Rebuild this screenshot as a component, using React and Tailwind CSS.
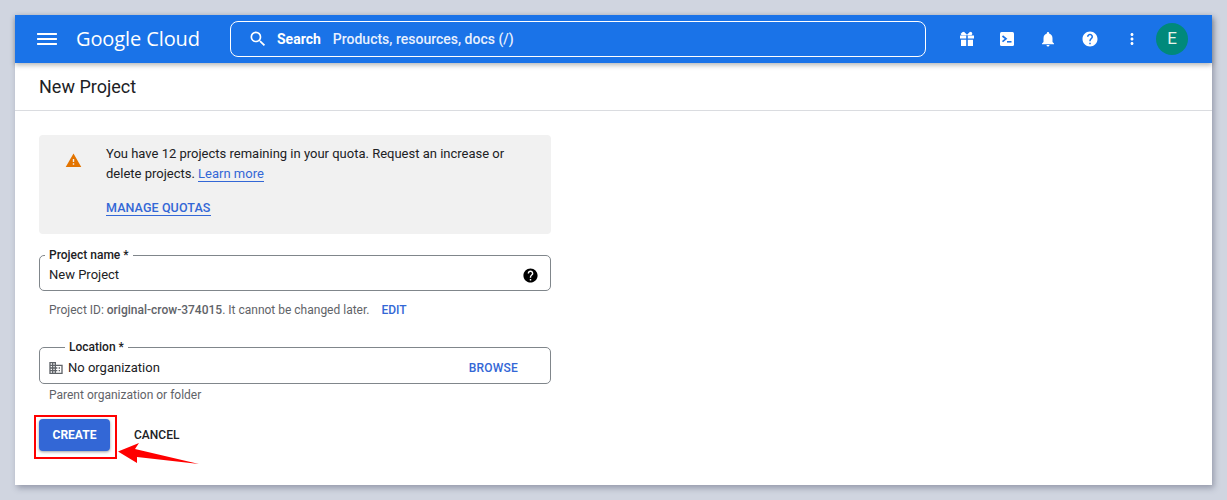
import React from "react";
import { MdMenu, MdSearch, MdNotifications, MdHelp, MdMoreVert, MdWarning, MdDomain } from "react-icons/md";

function GiftIcon() {
  return (
    <svg width="16" height="16" viewBox="0 0 16 16" fill="white">
      <path d="M1 4.5h6.2v3H1zM8.8 4.5H15v3H8.8zM2 8.7h5.2V15H2zM8.8 8.7H14V15H8.8z" />
      <path d="M3.2 1.2 5 .8 8 3.7 11 .8l1.8.4.6 1.8-1 1.2H2.6l-1-1.2z" />
    </svg>
  );
}

function ShellIcon() {
  return (
    <svg width="16" height="16" viewBox="0 0 16 16">
      <rect x="1" y="1" width="14" height="14" rx="1.5" fill="white" />
      <path d="M3.5 5 7 7.8 3.5 10.6" fill="none" stroke="#1a73e8" strokeWidth="1.7" />
      <path d="M8 10h4.5v1.6H8z" fill="#1a73e8" />
    </svg>
  );
}

function Field({ label, labelOffset, children }) {
  return (
    <fieldset className={`border border-[#80868b] rounded-[5px] w-[512px] ${labelOffset} flex items-center`}>
      <legend className="px-[4px] text-[12px] leading-[14px] font-medium text-[#202124]">{label}</legend>
      {children}
    </fieldset>
  );
}

export default function App() {
  return (
    <div className="min-h-[500px] bg-[#d0d5e0] p-[15px] font-['Roboto',sans-serif] overflow-hidden">
      <div className="relative w-[1197px] h-[470px] bg-white shadow-[2px_3px_6px_rgba(60,64,90,0.4)]">
        <header className="relative z-10 h-[48px] bg-[#1a73e8] flex items-center text-white shadow-[0_2px_5px_rgba(60,64,67,0.4)]">
          <MdMenu size={24} className="ml-[20px] scale-x-[1.1]" />
          <span className="ml-[17px] w-[154px] text-[20px] leading-[24px] tracking-[-0.1px] font-['Open_Sans',sans-serif] whitespace-nowrap">Google Cloud</span>
          <div className="w-[696px] h-[36px] border border-white rounded-[8px] flex items-center text-[14px]">
            <MdSearch size={20} className="ml-[17px]" />
            <span className="ml-[9px] font-bold">Search</span>
            <span className="ml-[12px] font-medium text-[#e8f0fe]">Products, resources, docs (/)</span>
          </div>
          <div className="ml-[33px] flex items-center gap-[24px]">
            <GiftIcon />
            <ShellIcon />
            <MdNotifications size={18} />
            <MdHelp size={18} />
            <MdMoreVert size={18} />
          </div>
          <div className="ml-[15px] w-[32px] h-[32px] rounded-full bg-[#00897b] flex items-center justify-center text-[17px] text-[#e6f4ea]">E</div>
        </header>

        <div className="h-[48px] border-b border-[#dadce0] pl-[24px] flex items-center text-[18px] text-[#202124]">New Project</div>

        <main className="pl-[24px] pt-[24px]">
          <section className="w-[512px] h-[99px] bg-[#f1f1f1] rounded-[4px] flex">
            <MdWarning size={17} className="ml-[26px] mt-[17px] text-[#e37400]" />
            <div className="ml-[24px] pt-[9px] text-[13px] leading-[20px] text-[#202124]">
              <p>You have 12 projects remaining in your quota. Request an increase or</p>
              <p>delete projects. <a className="text-[#3367d6] border-b border-[#3367d6]">Learn more</a></p>
              <a className="inline-block mt-[16px] leading-[15px] text-[12.5px] font-medium tracking-[0.1px] text-[#3367d6] border-b border-[#3367d6]">MANAGE QUOTAS</a>
            </div>
          </section>

          <div className="mt-[14px]">
            <Field label="Project name *" labelOffset="pl-[5px] h-[43px]">
              <div className="flex items-center justify-between w-full pl-[4px] pr-[11px] -mt-[2px] text-[13px] text-[#202124]">
                <span>New Project</span>
                <MdHelp size={17} className="text-black" />
              </div>
            </Field>
            <p className="mt-[11px] ml-[10px] h-[16px] text-[12px] leading-[16px] text-[#5f6368]">
              Project ID: <span className="font-medium">original-crow-374015</span>. It cannot be changed later.
              <a className="ml-[12px] font-medium text-[#3367d6]">EDIT</a>
            </p>
          </div>

          <div className="mt-[22px]">
            <Field label="Location *" labelOffset="pl-[25px] h-[44px]">
              <div className="flex items-center justify-between w-full -ml-[17px] pr-[15px] -mt-[2px] text-[13px] text-[#202124]">
                <span className="flex items-center gap-[4px]">
                  <MdDomain size={16} className="text-[#5f6368]" />
                  No organization
                </span>
                <a className="font-medium text-[12px] tracking-[0.2px] text-[#3367d6]">BROWSE</a>
              </div>
            </Field>
            <p className="mt-[3px] ml-[10px] text-[12px] leading-[16px] text-[#5f6368]">Parent organization or folder</p>
          </div>

          <div className="mt-[16px] flex items-center gap-[24px]">
            <button className="w-[71px] h-[32px] rounded-[4px] bg-[#3367d6] text-white text-[12px] font-bold shadow-[0_1px_3px_rgba(60,64,67,0.5)]">CREATE</button>
            <button className="text-[12px] font-medium text-[#202124]">CANCEL</button>
          </div>
        </main>

        <div className="absolute left-[19px] top-[400px] w-[83px] h-[44px] border-2 border-[#ff0000]"></div>
        <svg className="absolute left-[100px] top-[425px]" width="90" height="30" viewBox="0 0 90 30">
          <path d="M3 11.5 24 3 20 9 84 24 22 17 22 23z" fill="#ff0000" />
        </svg>
      </div>
    </div>
  );
}
